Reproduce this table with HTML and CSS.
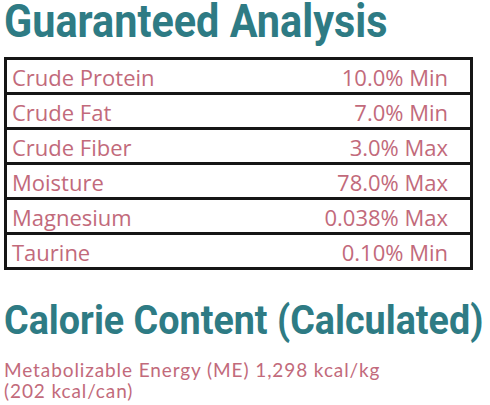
FILE: index.html
```html
<!DOCTYPE html>
<html lang="en">
<head>
  <meta charset="UTF-8">
  <link rel="stylesheet" href="styles.css">
</head>
<body>
  <div class="sheet">
    <h1 class="heading"><span>Guaranteed Analysis</span></h1>
    <table class="analysis">
      <tr><td>Crude Protein</td><td class="val">10.0% Min</td></tr>
      <tr><td>Crude Fat</td><td class="val">7.0% Min</td></tr>
      <tr><td>Crude Fiber</td><td class="val">3.0% Max</td></tr>
      <tr><td>Moisture</td><td class="val">78.0% Max</td></tr>
      <tr><td>Magnesium</td><td class="val">0.038% Max</td></tr>
      <tr><td>Taurine</td><td class="val">0.10% Min</td></tr>
    </table>
    <h2 class="heading calorie"><span>Calorie Content (Calculated)</span></h2>
    <p class="energy">Metabolizable Energy (ME) 1,298 kcal/kg<br>(202 kcal/can)</p>
  </div>
</body>
</html>
```

FILE: styles.css
```css
* {
  margin: 0;
  padding: 0;
}
html, body {
  background: #fff;
}
.sheet {
  padding: 0 0 0 4px;
}
/* condensed look: no narrow face installed, so stretch it taller */
.heading {
  font-family: Roboto, "Liberation Sans", sans-serif;
  font-weight: bold;
  font-size: 41.4px;
  line-height: 46px;
  color: #2e7b84;
  white-space: nowrap;
}
.heading span {
  display: inline-block;
  transform: scaleY(1.111);
  transform-origin: left 37px;
}
.analysis {
  margin-top: 11px;
  width: 469px;
  border-collapse: collapse;
  border: 3px solid #151515;
  font-family: "Open Sans", sans-serif;
  font-size: 22px;
  line-height: 30px;
  color: #c26a7b;
}
.analysis td {
  padding: 2px 0 0 5px;
  border-top: 3px solid #151515;
  border-bottom: 3px solid #151515;
}
.analysis .val {
  text-align: right;
  padding: 2px 22px 0 0;
}
.calorie {
  margin-top: 31px;
  font-size: 37.7px;
  line-height: 41px;
}
.calorie span {
  transform: scaleY(1.087);
  transform-origin: left 34px;
}
.energy {
  margin-top: 17px;
  font-family: "Lato", sans-serif;
  font-size: 19px;
  line-height: 21px;
  letter-spacing: 0.9px;
  color: #c26a7b;
}
```
